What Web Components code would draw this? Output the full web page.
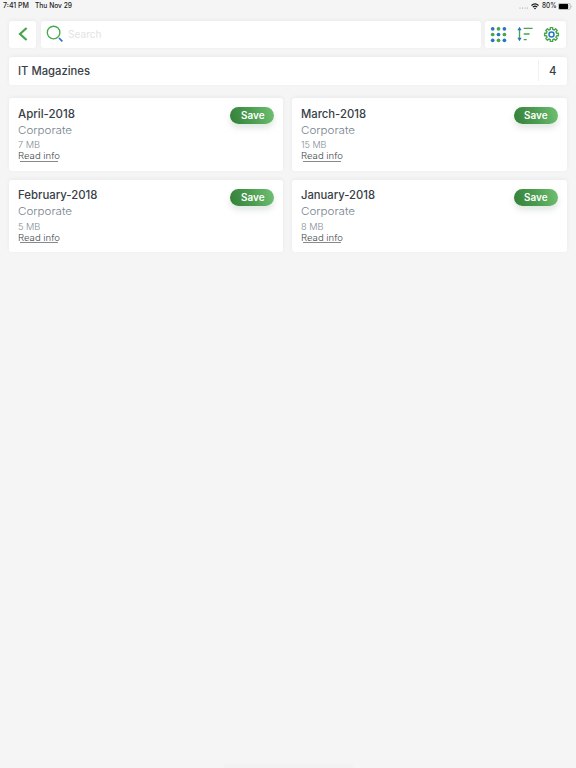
<!DOCTYPE html>
<html lang="en"><head><meta charset="utf-8"><title>IT Magazines</title>
<style>html,body{margin:0;height:100%;background:#f5f5f5;overflow:hidden}</style></head>
<body><magazine-app></magazine-app>
<script>
const make=(name,html,after)=>customElements.define(name,class extends HTMLElement{
  connectedCallback(){ if(this.shadowRoot)return;
    this.attachShadow({mode:'open'}).innerHTML=typeof html==='function'?html(this):html;
    if(after)after(this);
  }
});

/* Label whose glyphs are widened to a requested width */
make('wide-text',e=>`<style>:host{display:block;width:${e.getAttribute('w')}px;white-space:nowrap;flex:none}span{display:inline-block;transform-origin:0 50%}</style><span>${e.getAttribute('text')}</span>`,
 e=>{const s=e.shadowRoot.querySelector('span');const w=s.getBoundingClientRect().width;if(w)s.style.transform=`scaleX(${e.getAttribute('w')/w})`;});

make('ui-panel',`<style>:host{display:flex;align-items:center;background:#fff;border-radius:3px;box-shadow:0 -1px 4px rgba(0,0,0,.05);box-sizing:border-box}</style><slot></slot>`);

make('status-bar',`<style>:host{display:flex;align-items:center;height:12px;padding:0 4px 0 3.3px;font:500 7px/12px Inter,sans-serif;color:#222}
.gap{width:6px}.fill{flex:1}svg{display:block}.dots{margin-right:3px}.wifi{margin-right:3px}.bat{margin-left:2px}</style>
<wide-text w="26" text="7:41 PM"></wide-text><span class="gap"></span><wide-text w="37" text="Thu Nov 29"></wide-text><span class="fill"></span>
<svg class="dots" width="9" height="8" fill="#999"><circle cx="1" cy="6" r=".6"/><circle cx="3.5" cy="6" r=".6"/><circle cx="6" cy="6" r=".6"/><circle cx="8.4" cy="6" r=".6"/></svg>
<svg class="wifi" width="8" height="7" viewBox="0 0 8 7" fill="none" stroke="#111" stroke-width="1.25"><path d="M.5 2.5Q4-.6 7.5 2.5M1.8 4.1Q4 2.2 6.2 4.1"/><path d="M4 6.4 2.9 5.1Q4 4.2 5.1 5.1Z" fill="#111" stroke="none"/></svg>
<wide-text w="14.5" text="80%"></wide-text>
<svg class="bat" width="14" height="7" viewBox="0 0 14 7"><rect x=".4" y=".4" width="11.8" height="6.2" rx="1.5" fill="#fff" stroke="#999" stroke-width=".7"/><rect x="1" y="1" width="9.2" height="5" rx=".8" fill="#000"/><path d="M13 2.3Q14 3.5 13 4.7" fill="#999"/></svg>`);

make('tool-bar',`<style>:host{display:grid;grid-template-columns:27px 440px 81px;column-gap:4.5px;height:27px}
ui-panel{height:27px}.back{justify-content:center}.search{padding-left:5px;gap:4.5px;color:#e3e3e3;font:400 10.8px/27px Inter,sans-serif}.tools{padding:0 6px 1px 5px;justify-content:space-between}svg{display:block}.back svg,.search svg{margin-bottom:1px}</style>
<ui-panel class="back"><svg width="12" height="14" viewBox="0 0 12 14" fill="none" stroke="#43a64a" stroke-width="2.2"><path d="M9.6 1 3 7 9.6 13"/></svg></ui-panel>
<ui-panel class="search"><svg width="18" height="18" viewBox="0 0 18 18" fill="none"><circle cx="7.6" cy="7.5" r="6.3" stroke="#46aa4e" stroke-width="1.35"/><path d="m13 13 3.3 3.4" stroke="#2874c9" stroke-width="1.7"/></svg><wide-text w="33.5" text="Search"></wide-text></ui-panel>
<ui-panel class="tools">
<svg width="17" height="17" viewBox="0 0 17 17" fill="#2874c9"><circle cx="2.7" cy="2.8" r="1.85"/><circle cx="8.5" cy="2.8" r="1.85" fill="#46a64e"/><circle cx="14.4" cy="2.8" r="1.85"/><circle cx="2.7" cy="8.5" r="1.85" fill="#46a64e"/><circle cx="8.5" cy="8.5" r="1.85"/><circle cx="14.4" cy="8.5" r="1.85" fill="#46a64e"/><circle cx="2.7" cy="14.3" r="1.85"/><circle cx="8.5" cy="14.3" r="1.85" fill="#46a64e"/><circle cx="14.4" cy="14.3" r="1.85"/></svg>
<svg width="16" height="16" viewBox="0 0 16 16"><path d="M2.5 3V13M6.7 2.4H15.6M6.7 8H12.6M6.7 13.6H9.7" stroke="#46a64e" stroke-width="1.35"/><path d="M.4 4.2 2.5 .8 4.6 4.2ZM.4 11.8 2.5 15.2 4.6 11.8Z" fill="#2874c9"/></svg>
<svg id="gear" width="17" height="17" viewBox="-8.5 -8.5 17 17" fill="none" stroke-width="1.4"><path stroke="#46a64e" stroke-linejoin="round"/><circle r="2.5" stroke="#2874c9" stroke-width="1.5"/></svg>
</ui-panel>`,e=>{
 const p=[];for(let i=0;i<8;i++)for(const [o,r] of [[-14,5.2],[-10,7],[10,7],[14,5.2]]){const a=(i*45+o)*Math.PI/180;p.push((Math.cos(a)*r).toFixed(2)+' '+(Math.sin(a)*r).toFixed(2));}
 e.shadowRoot.querySelector('#gear path').setAttribute('d','M'+p.join('L')+'Z');});

make('section-title',`<style>:host{display:block;font:500 11.2px/28px Inter,sans-serif;color:#384047}ui-panel{height:28px;padding-left:8.9px;justify-content:space-between}
.count{width:29px;height:21px;display:flex;align-items:center;justify-content:center;border-left:1px solid #f1f1f1;box-sizing:border-box}</style>
<ui-panel><wide-text w="72" text="IT Magazines"></wide-text><div class="count"><wide-text w="7.5" text="4"></wide-text></div></ui-panel>`);

make('save-button',`<style>:host{display:flex;justify-content:center;width:44px;height:17px;border-radius:9px;background:linear-gradient(75deg,#348039,#4b9c50 48%,#70c174);box-shadow:0 4px 6px rgba(40,90,50,.15);color:#fff;font:600 9.7px/18px Inter,sans-serif}</style><wide-text w="23.5" text="Save"></wide-text>`);

make('magazine-card',e=>{const g=n=>e.getAttribute(n);return `<style>:host{display:block}ui-panel{height:72.5px;padding:7.7px 9px 0 8.9px;align-items:flex-start;justify-content:space-between;font-family:Inter,sans-serif}
save-button{margin-top:1.5px}.t{font-size:11.3px;font-weight:500;line-height:17px;color:#384047}.c{font-size:10.8px;font-weight:300;line-height:16.5px;color:#74838c}.m{font-size:8.8px;font-weight:300;line-height:11px;color:#7f8c93}.r{font-size:9px;line-height:11px;font-weight:300;color:#3f474c}
.line{height:1px;width:38px;margin:-.3px 0 0 1.5px;background:#858a8d}</style>
<ui-panel><div><wide-text class="t" w="${g('tw')}" text="${g('name')}"></wide-text><wide-text class="c" w="54" text="Corporate"></wide-text><wide-text class="m" w="${g('mw')}" text="${g('size')}"></wide-text><wide-text class="r" w="42" text="Read info"></wide-text><div class="line"></div></div><save-button></save-button></ui-panel>`});

make('magazine-app',`<style>:host{display:flex;flex-direction:column;height:768px;width:576px;background:#f5f5f5}
main{padding:9px 9px 0 9.3px;flex:1}section-title{margin-top:8.5px}.grid{display:grid;grid-template-columns:274px 274.5px;column-gap:9px;row-gap:9px;margin-top:13.5px}
.home{width:129px;height:4px;background:#f2f2f2;border-radius:2px 2px 0 0;align-self:center}</style>
<status-bar></status-bar><main><tool-bar></tool-bar><section-title></section-title><div class="grid">
<magazine-card name="April-2018" tw="57" size="7 MB" mw="22"></magazine-card>
<magazine-card name="March-2018" tw="65" size="15 MB" mw="25.5"></magazine-card>
<magazine-card name="February-2018" tw="79.5" size="5 MB" mw="22.3"></magazine-card>
<magazine-card name="January-2018" tw="74" size="8 MB" mw="22.5"></magazine-card>
</div></main><div class="home"></div>`);
</script></body></html>
